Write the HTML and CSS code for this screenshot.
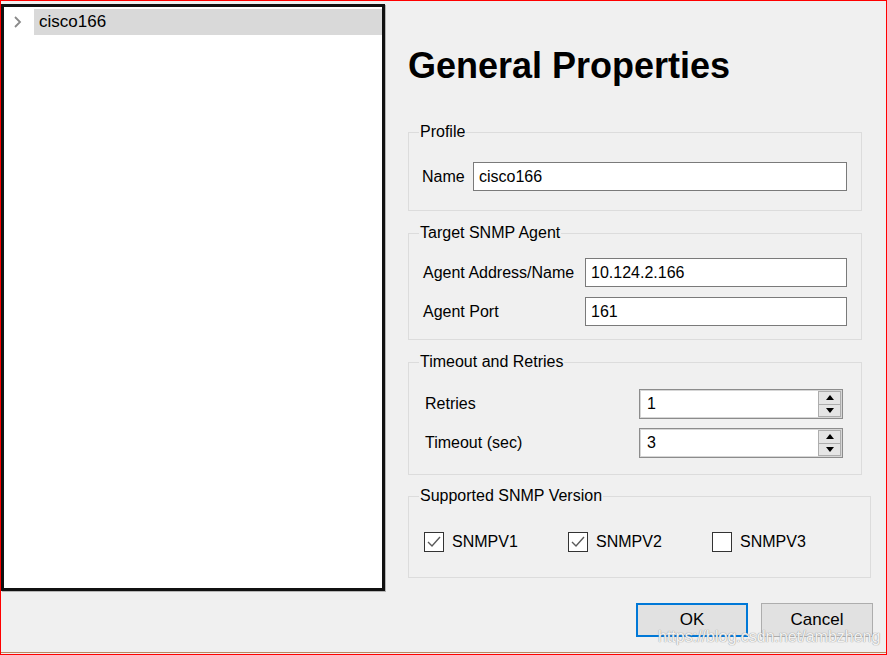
FILE: index.html
```html
<!DOCTYPE html>
<html lang="en">
  <head>
    <meta charset="UTF-8" />
    <meta name="viewport" content="width=device-width, initial-scale=1.0" />
    <title>General Properties</title>
    <link rel="stylesheet" href="styles.css">
  </head>
  <body>
    <div class="window">
      <div class="frame">
        <div class="tree">
          <div class="tree-row">
            <span class="tree-toggle">
              <svg width="10" height="14" viewBox="0 0 10 14"><polyline points="2,2 7,7 2,12" fill="none" stroke="#8a8a8a" stroke-width="1.8"/></svg>
            </span>
            <span class="tree-label">cisco166</span>
          </div>
        </div>

        <div class="pane">
          <h1>General Properties</h1>

          <fieldset class="group group-profile">
            <legend>Profile</legend>
            <div class="row">
              <label class="label col-name">Name</label>
              <div class="textbox">cisco166</div>
            </div>
          </fieldset>

          <fieldset class="group group-agent">
            <legend>Target SNMP Agent</legend>
            <div class="row">
              <label class="label col-agent">Agent Address/Name</label>
              <div class="textbox">10.124.2.166</div>
            </div>
            <div class="row">
              <label class="label col-agent">Agent Port</label>
              <div class="textbox">161</div>
            </div>
          </fieldset>

          <fieldset class="group group-timeout">
            <legend>Timeout and Retries</legend>
            <div class="row spin-row">
              <label class="label col-timeout">Retries</label>
              <div class="spinbox">
                <span class="spin-value">1</span>
                <span class="spin-buttons">
                  <span class="spin-up"></span>
                  <span class="spin-down"></span>
                </span>
              </div>
            </div>
            <div class="row spin-row">
              <label class="label col-timeout">Timeout (sec)</label>
              <div class="spinbox">
                <span class="spin-value">3</span>
                <span class="spin-buttons">
                  <span class="spin-up"></span>
                  <span class="spin-down"></span>
                </span>
              </div>
            </div>
          </fieldset>

          <fieldset class="group group-version">
            <legend>Supported SNMP Version</legend>
            <div class="check-row">
              <div class="check">
                <span class="checkbox">
                  <svg width="18" height="18" viewBox="0 0 18 18"><polyline points="3,9 7,13 15,4" fill="none" stroke="#5a5a5a" stroke-width="1.4"/></svg>
                </span>
                <span>SNMPV1</span>
              </div>
              <div class="check">
                <span class="checkbox">
                  <svg width="18" height="18" viewBox="0 0 18 18"><polyline points="3,9 7,13 15,4" fill="none" stroke="#5a5a5a" stroke-width="1.4"/></svg>
                </span>
                <span>SNMPV2</span>
              </div>
              <div class="check">
                <span class="checkbox"></span>
                <span>SNMPV3</span>
              </div>
            </div>
          </fieldset>

          <div class="buttons">
            <button class="button button-default">OK</button>
            <button class="button">Cancel</button>
          </div>

          <div class="watermark">https://blog.csdn.net/ambzheng</div>
        </div>
      </div>
    </div>
  </body>
</html>
```

FILE: styles.css
```css
* {
  box-sizing: border-box;
}

body {
  margin: 0;
  font-family: "Segoe UI", "Liberation Sans", Arial, sans-serif;
  font-size: 16px;
  color: #000;
  background-color: #f0f0f0;
}

.window {
  width: 887px;
  height: 655px;
  border: 1px solid #ff0000;
  background-color: #f0f0f0;
}

.frame {
  display: flex;
  height: 652px;
  border-bottom: 1px solid #b9875f;
}

/* left tree */
.tree {
  width: 384px;
  height: 587px;
  margin-top: 3px;
  padding-top: 2px;
  background-color: #fff;
  border: 3px solid #111;
  box-shadow: 1px 1px 0 #b5b5b5;
}

.tree-row {
  display: flex;
  align-items: center;
  height: 26px;
}

.tree-toggle {
  display: flex;
  align-items: center;
  width: 30px;
  height: 26px;
  padding-left: 9px;
}

.tree-label {
  flex: 1;
  height: 26px;
  line-height: 26px;
  padding-left: 5px;
  font-size: 17px;
  background-color: #d9d9d9;
}

/* right pane */
.pane {
  position: relative;
  flex: 1;
  padding-left: 23px;
  padding-right: 13px;
}

h1 {
  margin: 45px 0 0;
  font-size: 36px;
  line-height: 40px;
  font-weight: bold;
}

.group {
  width: 454px;
  margin: 13px 0 0;
  padding: 0 14px 0 10px;
  border: 1px solid #dcdcdc;
}

.group legend {
  padding: 0 1px;
  line-height: 18px;
}

.group-profile {
  margin-top: 37px;
  padding-top: 21px;
  padding-bottom: 19px;
}

.group-agent {
  padding-top: 16px;
  padding-bottom: 13px;
}

.group-timeout {
  padding-top: 18px;
  padding-bottom: 16px;
}

.group-version {
  margin-top: 12px;
  padding-top: 27px;
  padding-bottom: 25px;
}

.row {
  display: flex;
  align-items: center;
  height: 29px;
}

.row + .row {
  margin-top: 10px;
}

.spin-row {
  height: 30px;
}

.spin-row + .spin-row {
  margin-top: 9px;
}

.label {
  flex-shrink: 0;
}

.col-name {
  width: 54px;
  padding-left: 3px;
}

.col-agent {
  width: 166px;
  padding-left: 4px;
}

.col-timeout {
  width: 220px;
  padding-left: 6px;
}

.textbox {
  flex: 1;
  height: 29px;
  line-height: 27px;
  padding-left: 5px;
  background-color: #fff;
  border: 1px solid #7a7a7a;
}

.spinbox {
  display: flex;
  align-items: center;
  width: 204px;
  height: 30px;
  margin-right: 3px;
  background-color: #fff;
  border: 1px solid #8c8c8c;
  box-shadow: inset 0 0 0 1px #d6d6d6;
}

.spin-value {
  flex: 1;
  padding-left: 7px;
}

.spin-buttons {
  display: flex;
  flex-direction: column;
  width: 23px;
  height: 26px;
  margin-right: 1px;
  border: 1px solid #adadad;
}

.spin-up,
.spin-down {
  flex: 1;
  display: flex;
  align-items: center;
  justify-content: center;
  background-color: #e5e5e5;
}

.spin-up {
  border-bottom: 1px solid #adadad;
}

.spin-up::before {
  content: "";
  border-left: 4px solid transparent;
  border-right: 4px solid transparent;
  border-bottom: 5px solid #000;
}

.spin-down::before {
  content: "";
  border-left: 4px solid transparent;
  border-right: 4px solid transparent;
  border-top: 5px solid #000;
}

.check-row {
  display: flex;
  padding-left: 5px;
}

.check {
  display: flex;
  align-items: center;
  width: 144px;
  height: 20px;
  gap: 8px;
}

.checkbox {
  display: flex;
  align-items: center;
  justify-content: center;
  width: 20px;
  height: 20px;
  background-color: #fff;
  border: 1px solid #333;
}

.buttons {
  display: flex;
  justify-content: flex-end;
  gap: 13px;
  margin-top: 25px;
}

.button {
  width: 112px;
  height: 34px;
  font-family: inherit;
  font-size: 17px;
  color: #000;
  background-color: #e1e1e1;
  border: 1px solid #adadad;
  padding: 0;
}

.button-default {
  border: 2px solid #0078d7;
}

.watermark {
  position: absolute;
  left: 273px;
  top: 627px;
  font-family: "Liberation Sans", Arial, sans-serif;
  font-size: 16px;
  color: rgba(255, 255, 255, 0.9);
  text-shadow: 0 0 1px #9a9a9a, 0 0 1px #9a9a9a;
}
```
